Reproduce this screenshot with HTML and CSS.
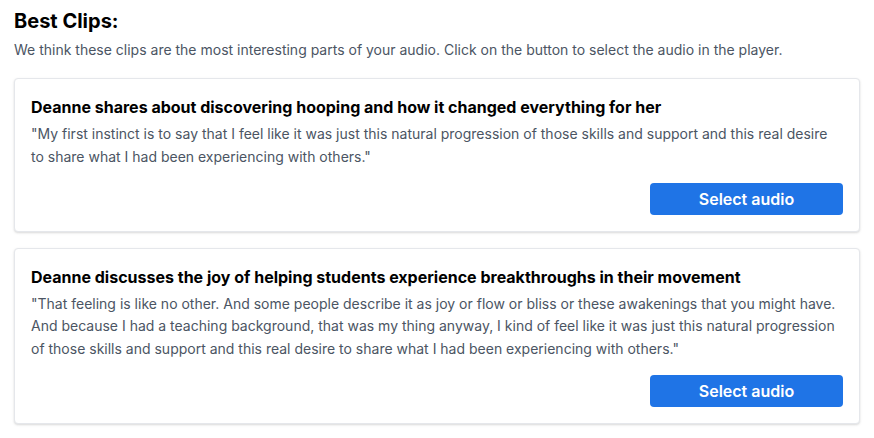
FILE: index.html
```html
<!DOCTYPE html>
<html lang="en">
<head>
    <meta charset="UTF-8">
    <meta name="viewport" content="width=device-width, initial-scale=1.0">
    <title>Best Clips</title>
    <link rel="stylesheet" href="styles.css">
</head>
<body>

<div class="clips">
    <h2>Best Clips:</h2>
    <p class="intro">We think these clips are the most interesting parts of your audio. Click on the button to select the audio in the player.</p>

    <div class="clip-card">
        <h3>Deanne shares about discovering hooping and how it changed everything for her</h3>
        <p class="quote">"My first instinct is to say that I feel like it was just this natural progression of those skills and support and this real desire to share what I had been experiencing with others."</p>
        <div class="clip-actions">
            <button>Select audio</button>
        </div>
    </div>

    <div class="clip-card">
        <h3>Deanne discusses the joy of helping students experience breakthroughs in their movement</h3>
        <p class="quote">"That feeling is like no other. And some people describe it as joy or flow or bliss or these awakenings that you might have. And because I had a teaching background, that was my thing anyway, I kind of feel like it was just this natural progression of those skills and support and this real desire to share what I had been experiencing with others."</p>
        <div class="clip-actions">
            <button>Select audio</button>
        </div>
    </div>
</div>

</body>
</html>
```

FILE: styles.css
```css
body {
    margin: 0;
    background: #fff;
    color: #000;
    font-family: Inter, "Noto Sans", Arial, sans-serif;
}
.clips {
    padding: 7px 14px 14px 14px;
}
.clips h2 {
    margin: 0;
    font-size: 20px;
    line-height: 28px;
    font-weight: 700;
}
.intro {
    margin: 5px 0 18px 0;
    font-size: 14px;
    line-height: 20px;
    color: #4b5563;
}
.clip-card {
    background: #fff;
    border: 1px solid #e5e7eb;
    border-radius: 4px;
    box-shadow: 0 1px 3px rgba(0, 0, 0, 0.1), 0 1px 2px rgba(0, 0, 0, 0.06);
    padding: 16px;
    margin-bottom: 16px;
}
.clip-card h3 {
    margin: 0;
    font-size: 16px;
    line-height: 24px;
    font-weight: 700;
}
.quote {
    margin: 4px 0 0 0;
    font-size: 14px;
    line-height: 22.75px;
    color: #4b5563;
}
.clip-actions {
    display: flex;
    justify-content: flex-end;
    margin-top: 14px;
}
.clip-actions button {
    width: 193px;
    height: 32px;
    background: #1f74e6;
    border: none;
    border-radius: 4px;
    color: #fff;
    font-family: inherit;
    font-size: 16px;
    font-weight: 600;
    cursor: pointer;
}
.clip-actions button:hover {
    background: #1a63c7;
}
```
